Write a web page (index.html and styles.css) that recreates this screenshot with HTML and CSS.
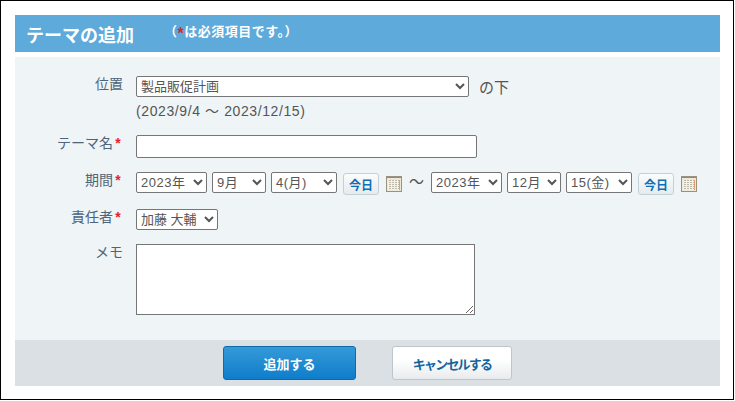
FILE: index.html
```html
<!DOCTYPE html>
<html lang="ja">
<head>
    <meta charset="UTF-8">
    <title>テーマの追加</title>
    <link rel="stylesheet" href="styles.css">
</head>
<body>

<div class="frame">
    <!-- Title bar -->
    <div class="title-bar">
        <h1>テーマの追加</h1>
        <span class="title-note">（<em>*</em>は必須項目です。）</span>
    </div>

    <!-- Form -->
    <div class="form-body">
        <div class="row row-position">
            <label class="row-label">位置</label>
            <div class="row-field">
                <div class="inline">
                    <select class="select-position"><option>製品販促計画</option></select>
                    <span class="below">の下</span>
                </div>
                <div class="range-note">(2023/9/4 ～ 2023/12/15)</div>
            </div>
        </div>

        <div class="row row-name">
            <label class="row-label req">テーマ名<em>*</em></label>
            <div class="row-field"><input type="text" class="input-name"></div>
        </div>

        <div class="row row-period">
            <label class="row-label req">期間<em>*</em></label>
            <div class="row-field date-line">
                <select class="sel-year"><option>2023年</option></select>
                <select class="sel-month"><option>9月</option></select>
                <select class="sel-day"><option>4(月)</option></select>
                <button class="btn-today">今日</button>
                <svg class="cal" viewBox="0 0 16 16"><use href="#cal-icon"/></svg>
                <span class="tilde">～</span>
                <select class="sel-year"><option>2023年</option></select>
                <select class="sel-month-end"><option>12月</option></select>
                <select class="sel-day"><option>15(金)</option></select>
                <button class="btn-today">今日</button>
                <svg class="cal" viewBox="0 0 16 16"><use href="#cal-icon"/></svg>
            </div>
        </div>

        <div class="row row-owner">
            <label class="row-label req">責任者<em>*</em></label>
            <div class="row-field"><select class="sel-owner"><option>加藤 大輔</option></select></div>
        </div>

        <div class="row row-memo">
            <label class="row-label">メモ</label>
            <div class="row-field"><textarea class="memo"></textarea></div>
        </div>
    </div>

    <!-- Buttons -->
    <div class="footer-bar">
        <button class="btn-add">追加する</button>
        <button class="btn-cancel">キャンセルする</button>
    </div>
</div>

<svg width="0" height="0" class="defs">
    <defs>
        <pattern id="cal-grid" width="3" height="2" patternUnits="userSpaceOnUse">
            <rect width="3" height="2" fill="#f4f1e6"/>
            <rect width="2" height="1" fill="#bdb9aa"/>
        </pattern>
        <symbol id="cal-icon" viewBox="0 0 16 16">
            <rect x="0" y="0" width="16" height="16" fill="#9a9180"/>
            <rect x="1" y="1" width="14" height="1" fill="#d0705c"/>
            <rect x="1" y="2" width="14" height="13" fill="#ece8da"/>
            <rect x="2" y="4" width="12" height="10" fill="url(#cal-grid)"/>
            <rect x="13" y="4" width="1" height="10" fill="#e0a070"/>
        </symbol>
    </defs>
</svg>

</body>
</html>
```

FILE: styles.css
```css
html, body {
    margin: 0;
    padding: 0;
}
body {
    width: 735px;
    height: 401px;
    overflow: hidden;
    background-color: #ffffff;
    font-family: "Liberation Sans", "Noto Sans CJK JP", sans-serif;
    font-size: 13px;
    color: #4a5a6a;
}
.defs {
    position: absolute;
}
.frame {
    box-sizing: border-box;
    width: 734px;
    height: 400px;
    border: 1px solid #000;
    padding: 14px 13px 0 14px;
}
.title-bar {
    display: flex;
    align-items: center;
    height: 37px;
    background-color: #5daadb;
    color: #fff;
}
.title-bar h1 {
    margin: 0 0 0 11px;
    width: 138px;
    font-size: 18px;
    font-weight: bold;
    flex: none;
}
.title-note {
    font-size: 13px;
    font-weight: bold;
    letter-spacing: 0.5px;
    margin-top: -6px;
}
em {
    font-style: normal;
    color: #e8202a;
}
.title-note em {
    font-size: 16px;
    line-height: 12px;
    vertical-align: -3px;
}
.form-body {
    box-sizing: border-box;
    height: 283px;
    margin-top: 5px;
    padding-top: 19px;
    background-color: #eff4f7;
}
.row {
    display: flex;
}
.row-label {
    box-sizing: border-box;
    width: 121px;
    padding-right: 13px;
    flex: none;
    text-align: right;
    font-size: 14px;
    line-height: 17px;
    color: #4f6478;
}
.row-label em {
    display: inline-block;
    width: 10px;
    text-align: center;
    font-weight: bold;
    font-size: 14px;
    line-height: 14px;
}
.row-field {
    min-width: 0;
}
select, input, textarea {
    box-sizing: border-box;
    margin: 0;
    font-family: "Liberation Sans", "Noto Sans CJK JP", sans-serif;
    font-size: 13px;
    color: #555;
    background-color: #fff;
    border: 1px solid #767676;
    border-radius: 2px;
}
select {
    height: 21px;
    letter-spacing: 0.5px;
}
.inline {
    display: flex;
    align-items: center;
}
.select-position {
    width: 333px;
    letter-spacing: 0;
}
.below {
    margin-left: 10px;
    font-size: 15px;
    color: #555;
}
.range-note {
    margin-top: 6px;
    font-size: 14px;
    letter-spacing: 0.6px;
    line-height: 17px;
    color: #555;
}
.row-name {
    margin-top: 15px;
}
.input-name {
    display: block;
    width: 341px;
    height: 23px;
}
.row-period {
    margin-top: 14px;
}
.date-line {
    display: flex;
    align-items: flex-start;
}
.sel-year {
    width: 71px;
}
.sel-month {
    width: 54px;
    margin-left: 5px;
}
.sel-month-end {
    width: 54px;
    margin-left: 5px;
}
.sel-day {
    width: 66px;
    margin-left: 5px;
}
.btn-today {
    box-sizing: border-box;
    width: 36px;
    height: 22px;
    margin: 1px 0 0 6px;
    padding: 0;
    border: 1px solid #c5d0d6;
    border-radius: 3px;
    background: linear-gradient(#fbfcfc, #e6ebee);
    color: #0f6fb5;
    font-family: inherit;
    font-size: 12px;
    font-weight: bold;
}
.cal {
    width: 16px;
    height: 16px;
    margin: 4px 0 0 7px;
    flex: none;
}
.tilde {
    width: 22px;
    margin-left: 7px;
    font-size: 15px;
    line-height: 20px;
    color: #555;
}
.row-owner {
    margin-top: 14px;
}
.sel-owner {
    width: 82px;
    letter-spacing: 0;
}
.row-memo {
    margin-top: 14px;
}
.memo {
    display: block;
    width: 339px;
    height: 71px;
    border-radius: 0;
}
.footer-bar {
    display: flex;
    justify-content: center;
    align-items: center;
    gap: 36px;
    height: 46px;
    background-color: #dbe0e4;
}
.btn-add, .btn-cancel {
    box-sizing: border-box;
    height: 34px;
    padding: 0;
    border-radius: 3px;
    font-family: inherit;
    font-size: 13px;
    font-weight: bold;
}
.btn-add {
    width: 133px;
    border: 1px solid #0f6aa8;
    background: linear-gradient(#349ad9, #0f7dca);
    color: #fff;
}
.btn-cancel {
    width: 120px;
    border: 1px solid #bcc6cc;
    background: linear-gradient(#ffffff 40%, #e8ebed);
    color: #14659f;
    letter-spacing: -1.8px;
}
```
